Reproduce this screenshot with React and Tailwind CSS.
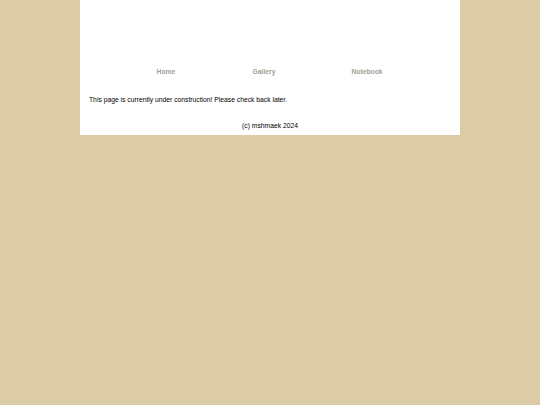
import React from "react";

export default function App() {
  return (
    <div className="min-h-[405px] bg-[#dbcba7] font-['Liberation_Sans',Arial,sans-serif]">
      <div className="mx-auto w-[380px] bg-white h-[135px] flex flex-col">
        {/* header space */}
        <div className="h-[67px]" />
        <nav className="grid grid-cols-[86px_98px_103px] h-[14px] text-[6.75px] font-bold text-[#a3a091]">
          <span className="justify-self-end translate-x-[50%]">Home</span>
          <span className="justify-self-end translate-x-[50%]">Gallery</span>
          <span className="justify-self-end translate-x-[50%]">Notebook</span>
        </nav>
        <p className="mt-[14px] pl-[9px] text-[6.75px] text-black">
          This page is currently under construction! Please check back later.
        </p>
        <p className="mt-[16px] text-center text-[6.75px] text-black">(c) mshmaek 2024</p>
      </div>
    </div>
  );
}
